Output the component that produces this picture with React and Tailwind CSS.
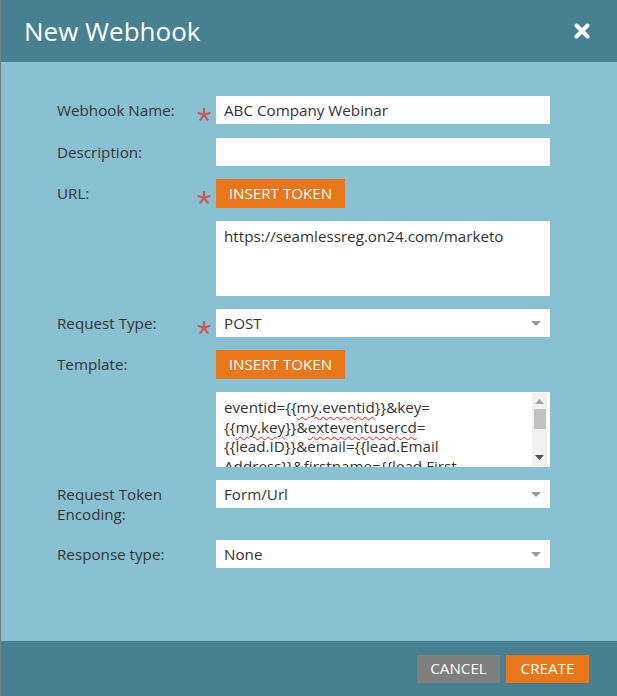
import { useState } from "react";

const font = { fontFamily: '"Open Sans", "Liberation Sans", sans-serif' };

function Star() {
  // required-field marker
  return (
    <svg width="14" height="13" viewBox="0 0 14 13" className="mt-[12px]">
      <g stroke="#c4595c" strokeWidth="2.2" strokeLinecap="round">
        <line x1="7" y1="6.8" x2="7" y2="1" />
        <line x1="7" y1="6.8" x2="12.6" y2="5" />
        <line x1="7" y1="6.8" x2="10.5" y2="11.6" />
        <line x1="7" y1="6.8" x2="3.5" y2="11.6" />
        <line x1="7" y1="6.8" x2="1.4" y2="5" />
      </g>
    </svg>
  );
}

function Row({ label, required, children, className = "" }) {
  return (
    <div className={`flex items-start ${className}`}>
      <div className="w-[140px] pt-[4px] text-[15.2px] leading-[20px] text-[#333]">{label}</div>
      <div className="w-[19px]">{required && <Star />}</div>
      <div className="w-[334px]">{children}</div>
    </div>
  );
}

function TextInput({ value, onChange }) {
  return (
    <input
      value={value}
      onChange={(e) => onChange(e.target.value)}
      className="block h-[28px] w-full bg-white px-[8px] text-[15.2px] text-[#333] outline-none"
      style={font}
    />
  );
}

function Select({ value }) {
  return (
    <div className="flex h-[28px] w-full items-center justify-between bg-white pl-[8px] pr-[9px] text-[15.2px] text-[#333]">
      <span>{value}</span>
      <svg width="10" height="5" viewBox="0 0 10 5">
        <path d="M0 0h10L5 5z" fill="#999" />
      </svg>
    </div>
  );
}

function TokenButton() {
  return (
    <button className="flex h-[29px] w-[129px] items-center justify-center bg-[#e8771b] text-[15.2px] text-white" style={font}>
      INSERT TOKEN
    </button>
  );
}

function Typo({ children }) {
  return <span className="underline decoration-wavy decoration-[#e21b1b] decoration-1 underline-offset-[3px]">{children}</span>;
}

export default function App() {
  const [name, setName] = useState("ABC Company Webinar");
  const [desc, setDesc] = useState("");

  return (
    <div className="flex h-[696px] w-[617px] flex-col overflow-hidden border-l border-[#6f8186]" style={font}>
      <div className="flex h-[62px] shrink-0 items-center justify-between bg-[#478191] pl-[23px] pr-[27px]">
        <h1 className="text-[26px] leading-none text-white">New Webhook</h1>
        <svg width="16" height="16" viewBox="0 0 16 16">
          <path d="M2.5 2.5l11 11M13.5 2.5l-11 11" stroke="#fff" strokeWidth="4" strokeLinecap="round" />
        </svg>
      </div>

      <div className="flex flex-1 flex-col gap-[13px] bg-[#89c1d3] pl-[56px] pt-[34px]">
        <Row label="Webhook Name:" required>
          <TextInput value={name} onChange={setName} />
        </Row>
        <Row label="Description:" className="mt-[1px]">
          <TextInput value={desc} onChange={setDesc} />
        </Row>
        <Row label="URL:" required>
          <TokenButton />
        </Row>
        <Row label="">
          <div className="h-[75px] w-full bg-white px-[8px] pt-[6px] text-[15.2px] leading-[19.5px] text-[#333]">
            https://seamlessreg.on24.com/marketo
          </div>
        </Row>
        <Row label="Request Type:" required>
          <Select value="POST" />
        </Row>
        <Row label="Template:">
          <TokenButton />
        </Row>
        <Row label="">
          <div className="flex h-[75px] w-full overflow-hidden bg-white">
            <div className="flex-1 overflow-hidden whitespace-nowrap pl-[8px] pt-[6px] text-[15.2px] leading-[19.5px] text-[#333]">
              <div>eventid={"{{"}<Typo>my.eventid</Typo>{"}}"}&amp;key=</div>
              <div>{"{{"}<Typo>my.key</Typo>{"}}"}&amp;<Typo>exteventusercd</Typo>=</div>
              <div>{"{{lead.ID}}&email={{lead.Email"}</div>
              <div>{"Address}}&firstname={{lead.First"}</div>
            </div>
            <div className="my-[1px] mr-[3px] flex w-[15px] flex-col items-center bg-[#f1f1f1]">
              <svg width="9" height="5" viewBox="0 0 9 5" className="mt-[6px]">
                <path d="M0 5L4.5 0L9 5z" fill="#a3a3a3" />
              </svg>
              <div className="mt-[5px] h-[20px] w-[12px] bg-[#c1c1c1]" />
              <div className="flex-1" />
              <svg width="9" height="5" viewBox="0 0 9 5" className="mb-[6px]">
                <path d="M0 0h9L4.5 5z" fill="#505050" />
              </svg>
            </div>
          </div>
        </Row>
        <Row label={<>Request Token<br />Encoding:</>}>
          <Select value="Form/Url" />
        </Row>
        <Row label="Response type:" className="mt-[3px]">
          <Select value="None" />
        </Row>
      </div>

      <div className="flex h-[55px] shrink-0 items-center justify-end gap-[6px] bg-[#478191] pr-[28px]">
        <button className="h-[28px] w-[83px] bg-[#7f7f7f] text-[15.2px] text-white" style={font}>CANCEL</button>
        <button className="h-[28px] w-[83px] bg-[#e8771b] text-[15.2px] text-white" style={font}>CREATE</button>
      </div>
    </div>
  );
}
